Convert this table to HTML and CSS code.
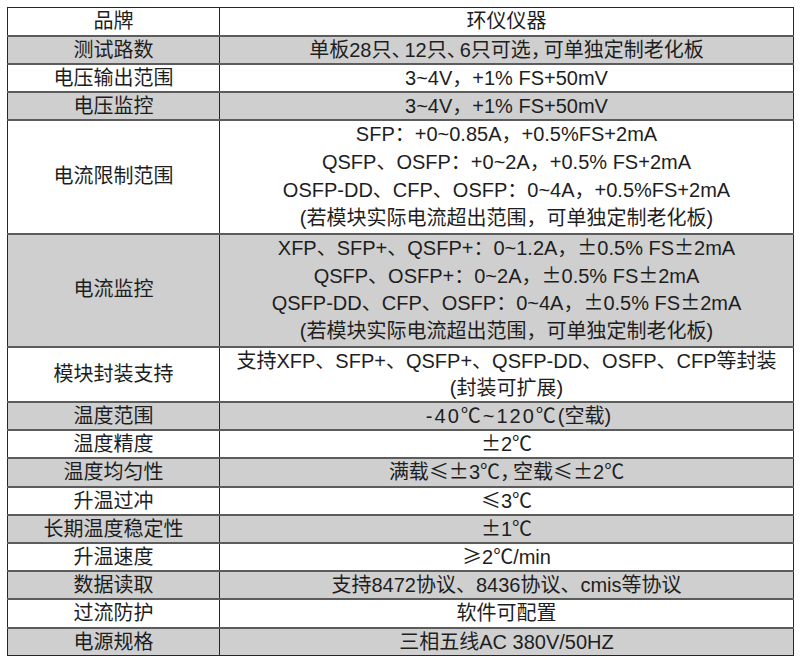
FILE: index.html
```html
<!DOCTYPE html>
<html lang="zh-CN">
<head>
<meta charset="utf-8">
<title>环仪仪器 参数表</title>
<link rel="stylesheet" href="styles.css">
</head>
<body>
<div class="page">
<table class="spec">
  <colgroup><col class="c-name"><col class="c-val"></colgroup>
  <tbody>
    <tr><td>品牌</td><td>环仪仪器</td></tr>
    <tr class="g"><td>测试路数</td><td>单板28只<span class="h">、</span>12只<span class="h">、</span>6只可选<span class="h">，</span>可单独定制老化板</td></tr>
    <tr><td>电压输出范围</td><td>3~4V，+1% FS+50mV</td></tr>
    <tr class="g"><td>电压监控</td><td>3~4V，+1% FS+50mV</td></tr>
    <tr class="l4"><td>电流限制范围</td><td>SFP：+0~0.85A，+0.5%FS+2mA<br>QSFP、OSFP：+0~2A，+0.5% FS+2mA<br>OSFP-DD、CFP、OSFP：0~4A，+0.5%FS+2mA<br>(若模块实际电流超出范围，可单独定制老化板)</td></tr>
    <tr class="g l4"><td>电流监控</td><td>XFP、SFP+、QSFP+：0~1.2A，<span class="s">±</span>0.5% FS<span class="s">±</span>2mA<br>QSFP、OSFP+：0~2A，<span class="s">±</span>0.5% FS<span class="s">±</span>2mA<br>QSFP-DD、CFP、OSFP：0~4A，<span class="s">±</span>0.5% FS<span class="s">±</span>2mA<br>(若模块实际电流超出范围，可单独定制老化板)</td></tr>
    <tr class="l2"><td>模块封装支持</td><td>支持XFP、SFP+、QSFP+、QSFP-DD、OSFP、CFP等封装<br>(封装可扩展)</td></tr>
    <tr class="g"><td>温度范围</td><td class="shift"><span class="wide">-40<span class="s">℃</span>~120<span class="s">℃</span></span>(空载)</td></tr>
    <tr><td>温度精度</td><td><span class="s">±</span>2<span class="s">℃</span></td></tr>
    <tr class="g"><td>温度均匀性</td><td>满载<span class="s">≤±</span>3<span class="s">℃</span><span class="h">，</span>空载<span class="s">≤±</span>2<span class="s">℃</span></td></tr>
    <tr><td>升温过冲</td><td><span class="s">≤</span>3<span class="s">℃</span></td></tr>
    <tr class="g"><td>长期温度稳定性</td><td><span class="s">±</span>1<span class="s">℃</span></td></tr>
    <tr><td>升温速度</td><td><span class="s">≥</span>2<span class="s">℃</span>/min</td></tr>
    <tr class="g"><td>数据读取</td><td>支持8472协议、8436协议、cmis等协议</td></tr>
    <tr><td>过流防护</td><td>软件可配置</td></tr>
    <tr class="g"><td>电源规格</td><td>三相五线AC 380V/50HZ</td></tr>
  </tbody>
</table>
</div>
</body>
</html>
```
FILE: styles.css
```css
html, body {
  margin: 0;
  padding: 0;
  background: #ffffff;
}
.page {
  padding: 7px;
}
.spec {
  border-collapse: collapse;
  width: 786px;
  table-layout: fixed;
  font-family: "Liberation Sans", "Noto Sans CJK SC", sans-serif;
  font-size: 20px;
  color: #1e1e1e;
}
.c-name { width: 212px; }
.c-val { width: 574px; }
.spec td {
  border-top: 2px solid #5c5c5c;
  border-bottom: 2px solid #5c5c5c;
  border-left: 1px solid #262626;
  border-right: 1px solid #262626;
  padding: 0;
  text-align: center;
  vertical-align: middle;
  line-height: 26.2px;
}
.spec tr:first-child td {
  border-top: 1px solid #262626;
  line-height: 26.7px;
}
.spec tr:last-child td {
  border-bottom: 1px solid #262626;
  line-height: 26.7px;
}
.spec tr.l4 td {
  line-height: 27.85px;
}
.spec tr.l2 td {
  line-height: 26.5px;
}
.spec tr.g td {
  background: #cfcfcf;
}
.s {
  font-family: "Noto Sans CJK SC", sans-serif;
  line-height: 1;
}
.h {
  font-family: "Noto Sans CJK SC", sans-serif;
  font-feature-settings: "halt" 1;
  letter-spacing: 3px;
  line-height: 1;
}
.spec td.shift {
  padding-left: 24px;
}
.wide {
  letter-spacing: 2px;
}
```
